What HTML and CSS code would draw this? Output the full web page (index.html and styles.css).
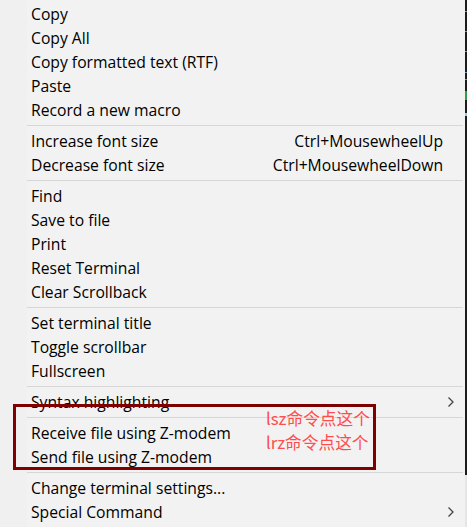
FILE: index.html
```html
<!DOCTYPE html>
<html>
<head>
<meta charset="utf-8">
<link rel="stylesheet" href="styles.css">
</head>
<body>
<div class="screen">
  <div class="menu">
    <div class="item"><span class="label">Copy</span></div>
    <div class="item"><span class="label">Copy All</span></div>
    <div class="item"><span class="label">Copy formatted text (RTF)</span></div>
    <div class="item"><span class="label">Paste</span></div>
    <div class="item"><span class="label">Record a new macro</span></div>
    <div class="sep"></div>
    <div class="item"><span class="label">Increase font size</span><span class="key">Ctrl+MousewheelUp</span></div>
    <div class="item"><span class="label">Decrease font size</span><span class="key">Ctrl+MousewheelDown</span></div>
    <div class="sep"></div>
    <div class="item"><span class="label">Find</span></div>
    <div class="item"><span class="label">Save to file</span></div>
    <div class="item"><span class="label">Print</span></div>
    <div class="item"><span class="label">Reset Terminal</span></div>
    <div class="item"><span class="label">Clear Scrollback</span></div>
    <div class="sep"></div>
    <div class="item"><span class="label">Set terminal title</span></div>
    <div class="item"><span class="label">Toggle scrollbar</span></div>
    <div class="item"><span class="label">Fullscreen</span></div>
    <div class="sep"></div>
    <div class="item"><span class="label">Syntax highlighting</span><svg class="arrow" width="8" height="12" viewBox="0 0 8 12"><path d="M1.5 1.5 L6 6 L1.5 10.5" fill="none" stroke="#444" stroke-width="1.3"/></svg></div>
    <div class="sep"></div>
    <div class="item"><span class="label">Receive file using Z-modem</span></div>
    <div class="item"><span class="label">Send file using Z-modem</span></div>
    <div class="sep"></div>
    <div class="item"><span class="label">Change terminal settings...</span></div>
    <div class="item"><span class="label">Special Command</span><svg class="arrow" width="8" height="12" viewBox="0 0 8 12"><path d="M1.5 1.5 L6 6 L1.5 10.5" fill="none" stroke="#444" stroke-width="1.3"/></svg></div>

    <div class="annot-box"></div>
    <div class="annot-text">
      <span>lsz命令点这个</span>
      <span>lrz命令点这个</span>
    </div>
  </div>
  <div class="edge">
    <div class="edge-dark">
      <i class="tick t1"></i><i class="tick t2"></i><i class="tick t3"></i><i class="tick t4"></i><i class="tick t5"></i><i class="tick green"></i><i class="tick t6"></i><i class="tick t7"></i>
    </div>
    <div class="edge-light"></div>
  </div>
</div>
</body>
</html>
```
FILE: styles.css
```css
html, body {
  margin: 0;
  padding: 0;
  background: #f2f2f2;
}
.screen {
  display: flex;
  width: 467px;
  height: 527px;
  overflow: hidden;
}
.menu {
  position: relative;
  width: 465px;
  height: 527px;
  background: linear-gradient(to right, #f0f0f0 0, #f0f0f0 27px, #f2f2f2 27px);
  padding-top: 2px;
  box-sizing: border-box;
  font-family: "Open Sans", "Noto Sans", "Noto Sans CJK SC", sans-serif;
  font-size: 15.7px;
  color: #000;
}
.item {
  display: flex;
  align-items: center;
  height: 24px;
  padding-left: 31px;
  padding-right: 22px;
}
.label {
  flex: 1;
  white-space: nowrap;
}
.key {
  white-space: nowrap;
}
.arrow {
  margin-right: -12px;
}
.sep {
  height: 7px;
  display: flex;
  align-items: center;
  padding-left: 27px;
  padding-right: 2px;
}
.sep::before {
  content: "";
  flex: 1;
  height: 1px;
  background: #d7d7d7;
}
.annot-box {
  position: absolute;
  left: 13px;
  top: 404px;
  width: 357px;
  height: 60px;
  border: 3px solid #7f0000;
}
.annot-text {
  position: absolute;
  left: 266px;
  top: 406px;
  display: flex;
  flex-direction: column;
  font-family: "Noto Sans CJK SC", sans-serif;
  font-size: 16.7px;
  line-height: 24px;
  color: #ff4d4d;
}
.edge {
  width: 2px;
  display: flex;
  flex-direction: column;
}
.edge-dark {
  position: relative;
  height: 475px;
  background: #1c1c1c;
}
.edge-light {
  flex: 1;
  background: #e6e6e6;
}
.tick {
  position: absolute;
  left: 0;
  width: 2px;
  height: 1px;
  background: #4aa3df;
}
.t1 { top: 11px; }
.t2 { top: 31px; }
.t3 { top: 51px; }
.t4 { top: 72px; }
.t5 { top: 79px; }
.green { top: 91px; height: 9px; background: #2ea043; }
.t6 { top: 113px; height: 3px; background: #8fd0f0; }
.t7 { top: 300px; height: 0; }
```
